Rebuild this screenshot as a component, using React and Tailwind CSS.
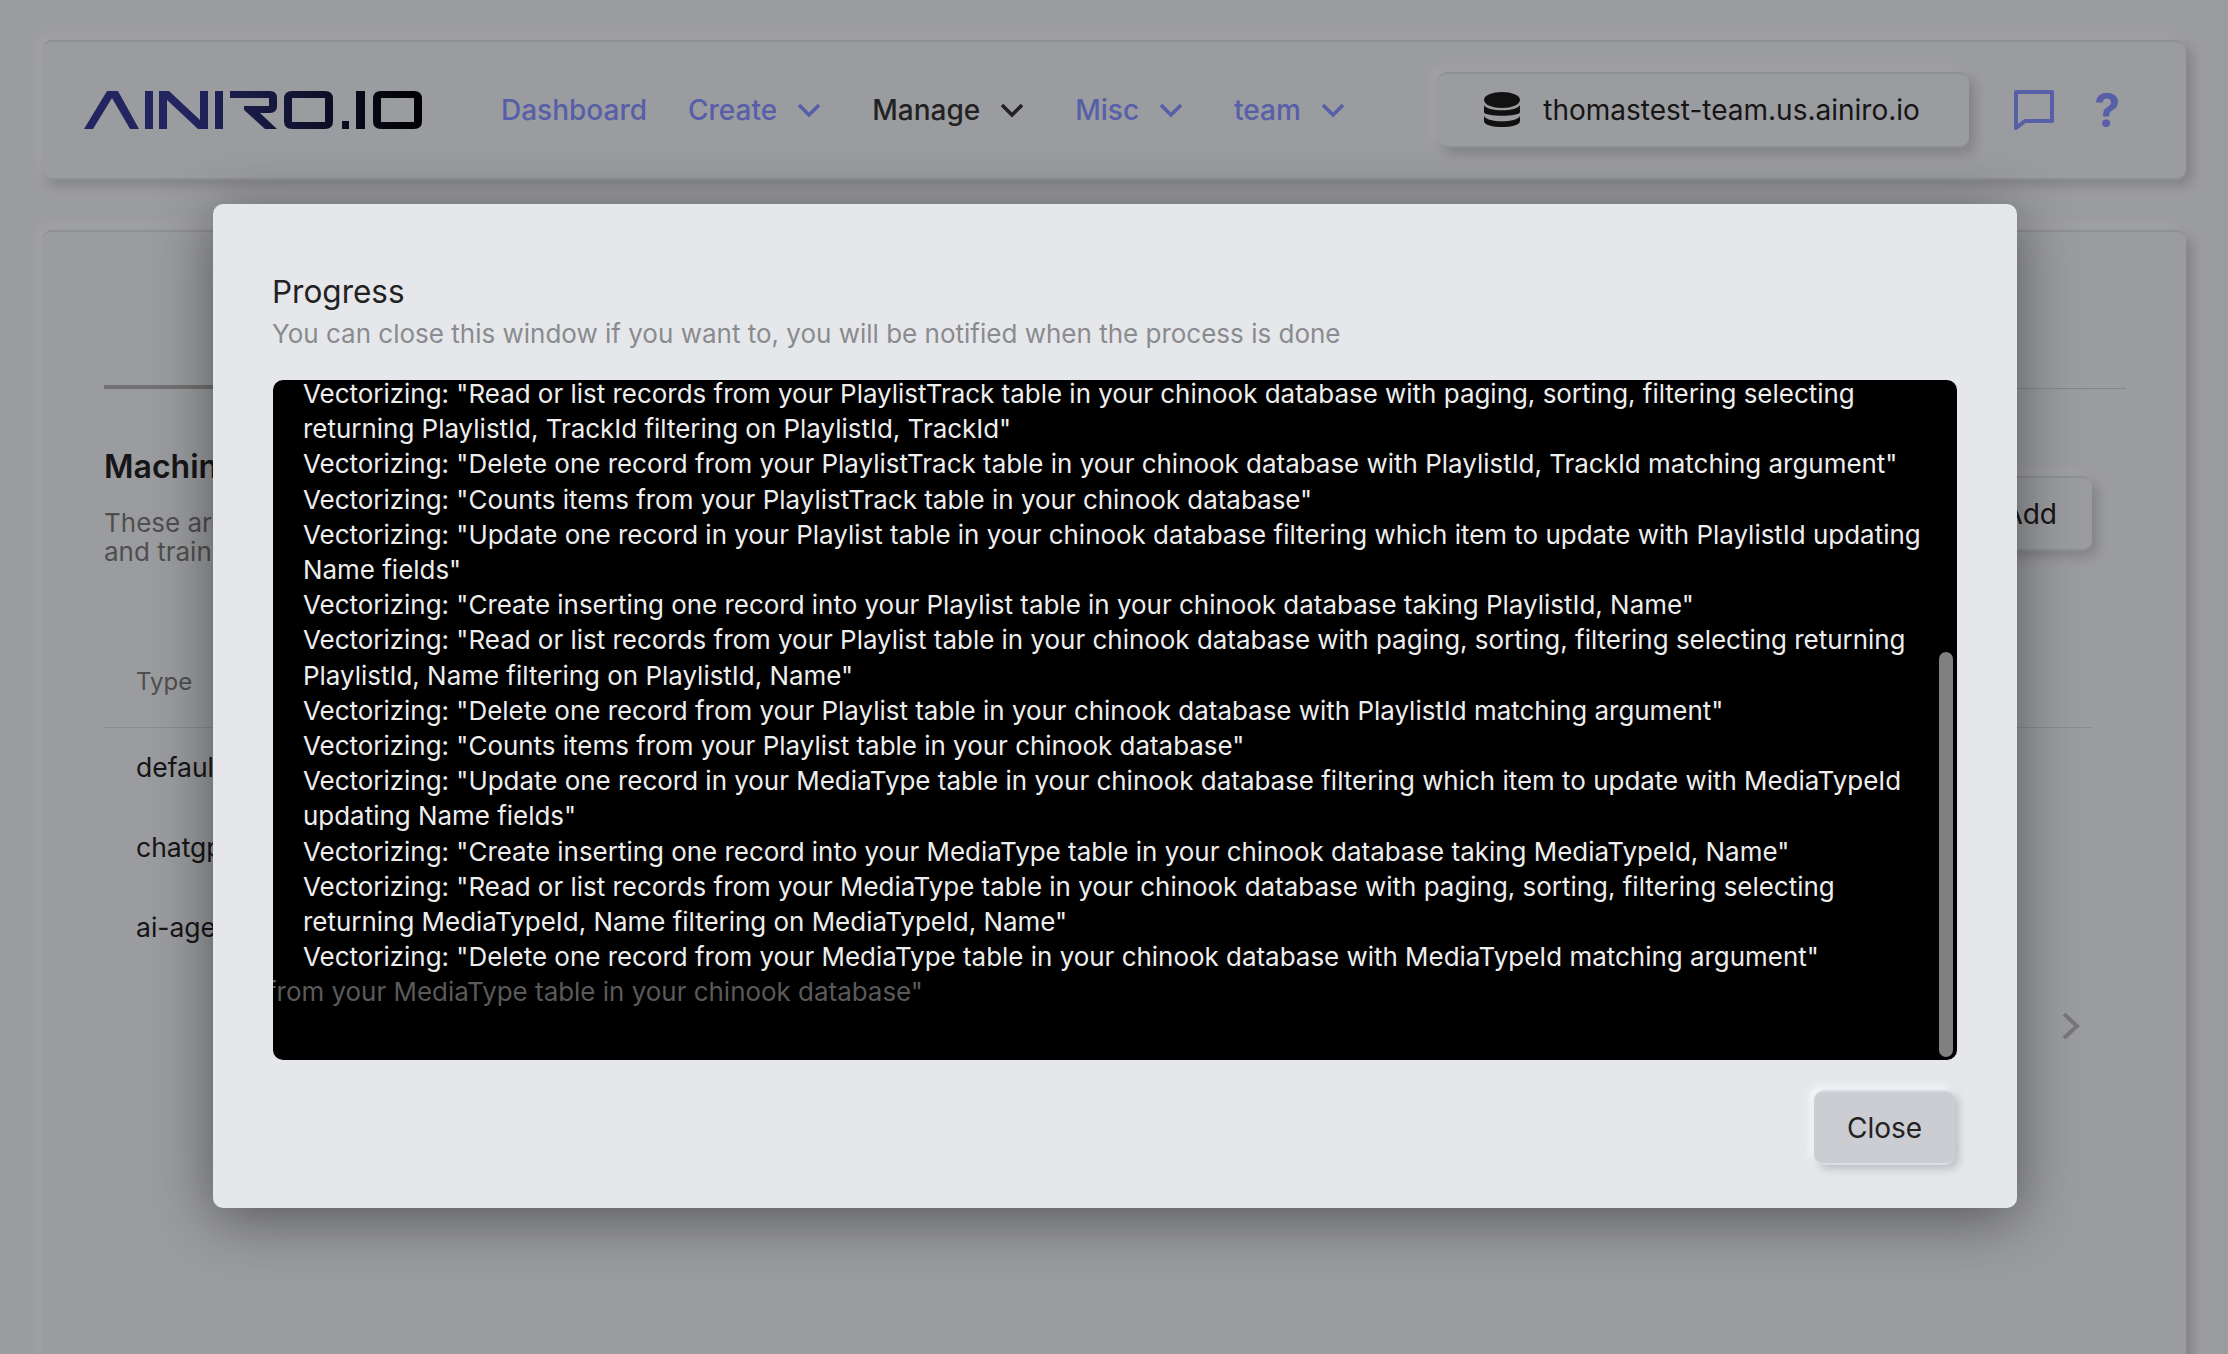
const LOGS = [
  'Vectorizing: "Read or list records from your PlaylistTrack table in your chinook database with paging, sorting, filtering selecting',
  'returning PlaylistId, TrackId filtering on PlaylistId, TrackId"',
  'Vectorizing: "Delete one record from your PlaylistTrack table in your chinook database with PlaylistId, TrackId matching argument"',
  'Vectorizing: "Counts items from your PlaylistTrack table in your chinook database"',
  'Vectorizing: "Update one record in your Playlist table in your chinook database filtering which item to update with PlaylistId updating',
  'Name fields"',
  'Vectorizing: "Create inserting one record into your Playlist table in your chinook database taking PlaylistId, Name"',
  'Vectorizing: "Read or list records from your Playlist table in your chinook database with paging, sorting, filtering selecting returning',
  'PlaylistId, Name filtering on PlaylistId, Name"',
  'Vectorizing: "Delete one record from your Playlist table in your chinook database with PlaylistId matching argument"',
  'Vectorizing: "Counts items from your Playlist table in your chinook database"',
  'Vectorizing: "Update one record in your MediaType table in your chinook database filtering which item to update with MediaTypeId',
  'updating Name fields"',
  'Vectorizing: "Create inserting one record into your MediaType table in your chinook database taking MediaTypeId, Name"',
  'Vectorizing: "Read or list records from your MediaType table in your chinook database with paging, sorting, filtering selecting',
  'returning MediaTypeId, Name filtering on MediaTypeId, Name"',
  'Vectorizing: "Delete one record from your MediaType table in your chinook database with MediaTypeId matching argument"',
];

const NEU = 'shadow-[6px_6px_12px_rgba(0,0,0,0.16),-6px_-6px_12px_rgba(255,255,255,0.4)]';

function Logo() {
  return (
    <svg viewBox="0 0 340 40" className="w-[340px] h-[40px] shrink-0">
      <defs>
        <linearGradient id="logoFill" x1="0" x2="1" y1="0" y2="0">
          <stop offset="0" stopColor="#33388f" />
          <stop offset="0.3" stopColor="#33388f" />
          <stop offset="1" stopColor="#000" />
        </linearGradient>
      </defs>
      <path fill="url(#logoFill)" fillRule="evenodd" d="M0 39 L23 1 L34 1 L55 39 L46 39 L28 8 L9 39 Z
        M61 1 H69 V39 H61 Z
        M75 1 H85 L116 30 V1 H124 V39 H114 L83 10 V39 H75 Z
        M131 1 H139 V39 H131 Z
        M146 1 H186 Q193 1 193 8 V16 Q193 23 186 23 H176 L193 39 H181 L160 20 V16 H185 V8 H146 Z
        M208 1 H241 Q249 1 249 9 V31 Q249 39 241 39 H208 Q200 39 200 31 V9 Q200 1 208 1 Z M208 8 V32 H241 V8 Z
        M258 31 H265 V39 H258 Z
        M272 1 H281 V39 H272 Z
        M297 1 H330 Q338 1 338 9 V31 Q338 39 330 39 H297 Q289 39 289 31 V9 Q289 1 297 1 Z M297 8 V32 H330 V8 Z" />
    </svg>
  );
}

function Chevron() {
  return (
    <svg viewBox="0 0 24 15" className="w-[24px] h-[15px]" fill="none" stroke="currentColor" strokeWidth="3.6">
      <polyline points="2,2 12,12 22,2" />
    </svg>
  );
}

function NavItem({ label, active, menu, className }) {
  return (
    <div className={`flex items-center gap-[20px] text-[28px] font-medium ${active ? 'text-[#333]' : 'text-[#808efa]'} ${className || ''}`}>
      <span>{label}</span>
      {menu && <Chevron />}
    </div>
  );
}

export default function App() {
  return (
    <div className="relative h-screen overflow-hidden bg-[#e8e9ee] text-[#222] px-[42px] pt-[40px] font-['Inter',sans-serif]">
      {/* Page behind the modal */}
      <div className={`h-[140px] flex items-center pl-[42px] pr-[66px] rounded-[10px] border-y-2 border-[#d3d7de] ${NEU}`}>
        <Logo />
        <nav className="flex items-center ml-[77px] flex-1">
          <NavItem label="Dashboard" />
          <NavItem label="Create" menu className="ml-[41px]" />
          <NavItem label="Manage" active menu className="ml-[51px]" />
          <NavItem label="Misc" menu className="ml-[51px]" />
          <NavItem label="team" menu className="ml-[51px]" />
        </nav>
        <div className={`w-[532px] h-[76px] flex items-center pl-[46px] gap-[22px] rounded-[10px] border-y-2 border-[#d3d7de] text-[28px] ${NEU}`}>
          <svg viewBox="0 0 38 36" className="w-[38px] h-[36px]" fill="#1a1a1a">
            <ellipse cx="19" cy="8" rx="18" ry="8" />
            <path d="M1 13 C4 20 34 20 37 13 V20 C37 25 1 25 1 20 Z" />
            <path d="M1 24 C4 31 34 31 37 24 V29 C37 37 1 37 1 29 Z" />
          </svg>
          <span className="text-[#222]">thomastest-team.us.ainiro.io</span>
        </div>
        <svg viewBox="0 0 40 40" className="w-[40px] h-[40px] ml-[45px]" fill="none" stroke="#808efa" strokeWidth="4">
          <path d="M2 2 H38 V31 H11 L2 38 Z" strokeLinejoin="round" />
        </svg>
        <span className="ml-[40px] text-[#808efa] text-[46px] font-bold leading-none">?</span>
      </div>

      <div className={`mt-[50px] h-[1300px] rounded-[10px] border-y-2 border-[#d3d7de] px-[62px] pt-[156px] ${NEU}`}>
        <div className="border-b border-[#c6c8cc] w-[2022px] relative">
          <div className="absolute left-0 -bottom-px w-[200px] h-[4px] bg-[#aaa]" />
        </div>
        <div className="flex justify-between items-start w-[1988px] mt-[58px]">
          <div>
            <h2 className="text-[32px] font-semibold leading-[40px]">Machine Learning</h2>
            <p className="mt-[21px] text-[26px] leading-[29px] text-[#777]">These are your types<br />and training</p>
          </div>
          <button className={`mt-[29px] h-[75px] px-[35px] rounded-[10px] border-y-2 border-[#d3d7de] text-[28px] ${NEU}`}>Add</button>
        </div>
        <div className="w-[1988px] mt-[71px]">
          <div className="border-b border-[#cfd1d5] pl-[32px] h-[91px] text-[24px] text-[#777] flex items-center">Type</div>
          {['default', 'chatgpt', 'ai-agent'].map((t) => (
            <div key={t} className="pl-[32px] h-[80px] text-[26.5px] flex items-center">{t}</div>
          ))}
        </div>
        <div className="w-[1988px] flex justify-end pr-[12px] mt-[44px]">
          <svg viewBox="0 0 18 28" className="w-[18px] h-[28px]" fill="none" stroke="#b2b2b2" strokeWidth="4">
            <polyline points="2,2 15,14 2,26" />
          </svg>
        </div>
      </div>

      {/* Backdrop + progress modal */}
      <div className="absolute inset-0 bg-[rgba(0,0,0,0.33)]">
        <div className="absolute left-[213px] top-[204px] w-[1804px] h-[1004px] bg-[#e5e7eb] rounded-[10px] px-[60px] pt-[70px] flex flex-col shadow-[0_10px_60px_rgba(0,0,0,0.45)]">
          <h3 className="text-[31.5px] leading-[36px] text-[#222] -ml-px">Progress</h3>
          <p className="mt-[6px] text-[26px] leading-[36px] text-[#8a8b8e] -ml-px">You can close this window if you want to, you will be notified when the process is done</p>
          <div className="relative mt-[28px] h-[680px] bg-black rounded-[10px] overflow-hidden text-[25.95px] leading-[35.2px] text-[#eee]">
            <div className="-mt-[4px] pl-[30px]">
              {LOGS.map((line, i) => (
                <div key={i} className="whitespace-nowrap">{line}</div>
              ))}
              <div className="-ml-[36px] whitespace-nowrap text-[#5a5a5a]">from your MediaType table in your chinook database"</div>
            </div>
            <div className="absolute right-[4px] bottom-[3px] w-[14px] h-[405px] rounded-full bg-[#808080]" />
          </div>
          <div className="flex justify-end mt-[30px]">
            <button className="w-[141px] h-[75px] mr-[2px] rounded-[10px] bg-[#cbcdd3] text-[28px] text-[#222] border-y-2 border-[#d9dde6] shadow-[4px_4px_8px_rgba(0,0,0,0.18),-4px_-4px_8px_rgba(255,255,255,0.7)]">Close</button>
          </div>
        </div>
      </div>
    </div>
  );
}
